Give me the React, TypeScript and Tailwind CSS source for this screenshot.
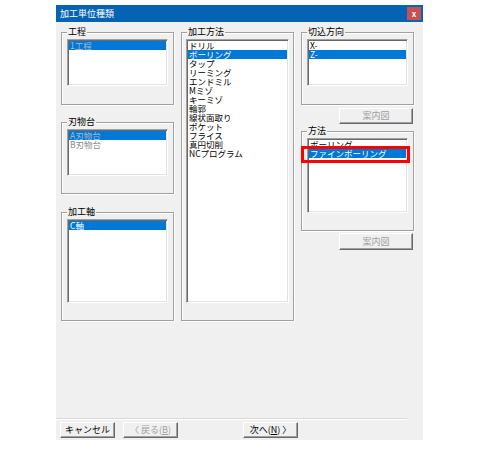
import type { ReactNode } from "react";

const FONT = { fontFamily: '"Noto Sans CJK JP", "Noto Sans", sans-serif' };

type Item = { label: string; selected?: boolean };

function Group({ label, className, children }: { label: string; className: string; children: ReactNode }) {
  return (
    <div
      className={`relative border border-[#a0a0a0] shadow-[inset_1px_1px_0_#fff,1px_1px_0_#fff] pt-[6px] px-[5px] ${className}`}
    >
      <span className="absolute left-[5px] -top-[7px] bg-[#f0f0f0] px-[1px] text-[9px] leading-[12px] text-black">
        {label}
      </span>
      {children}
    </div>
  );
}

function ListBox({
  items,
  className,
  disabled = false,
}: {
  items: Item[];
  className: string;
  disabled?: boolean;
}) {
  return (
    <div
      className={`bg-white border border-t-[#a0a0a0] border-l-[#a0a0a0] border-r-white border-b-white shadow-[inset_1px_1px_0_#696969,inset_-1px_-1px_0_#e3e3e3] p-[1px] overflow-hidden ${className}`}
    >
      {items.map((it) => (
        <div
          key={it.label}
          className={`h-[9px] leading-[9px] text-[8.5px] pl-px whitespace-nowrap ${
            it.selected ? "bg-[#0078d7]" : ""
          } ${
            disabled
              ? it.selected
                ? "text-[#a9b9cc]"
                : "text-[#8c8c8c]"
              : it.selected
              ? "text-white"
              : "text-black"
          }`}
        >
          {it.label}
        </div>
      ))}
    </div>
  );
}

function Button({ children, disabled = false, className = "" }: { children: ReactNode; disabled?: boolean; className?: string }) {
  return (
    <div
      className={`flex items-center justify-center bg-[#f0f0f0] border border-t-white border-l-white border-r-[#696969] border-b-[#696969] shadow-[inset_-1px_-1px_0_#a0a0a0] text-[9px] leading-[10px] ${
        disabled ? "text-[#a0a0a0]" : "text-black"
      } ${className}`}
    >
      {children}
    </div>
  );
}

export default function App() {
  const methods: Item[] = [
    { label: "ドリル" },
    { label: "ボーリング", selected: true },
    { label: "タップ" },
    { label: "リーミング" },
    { label: "エンドミル" },
    { label: "Mミゾ" },
    { label: "キーミゾ" },
    { label: "輪郭" },
    { label: "線状面取り" },
    { label: "ポケット" },
    { label: "フライス" },
    { label: "真円切削" },
    { label: "NCプログラム" },
  ];

  return (
    <div className="w-[480px] h-[459px] bg-white pt-[5px] pl-[56px]" style={FONT}>
      <div className="w-[367px] h-[435px] flex flex-col bg-[#f0f0f0]">
        {/* Title bar */}
        <div className="h-[17px] bg-[#0563b4] flex items-center justify-between pl-[4px] pr-[2px]">
          <span className="text-white text-[9px] leading-[10px]">加工単位種類</span>
          <div className="w-[14px] h-[13px] bg-[#c75050] flex items-center justify-center text-white text-[8px] leading-none font-bold">
            x
          </div>
        </div>

        {/* Body */}
        <div className="flex-1 flex flex-col pt-[10px]">
          <div className="flex gap-[7px] pl-[5px]">
            {/* Left column */}
            <div className="w-[113px] flex flex-col">
              <Group label="工程" className="h-[73px]">
                <ListBox disabled className="h-[47px]" items={[{ label: "1工程", selected: true }]} />
              </Group>
              <Group label="刃物台" className="h-[72px] mt-[17px]">
                <ListBox
                  disabled
                  className="h-[47px]"
                  items={[{ label: "A刃物台", selected: true }, { label: "B刃物台" }]}
                />
              </Group>
              <Group label="加工軸" className="h-[109px] mt-[18px]">
                <ListBox className="h-[84px]" items={[{ label: "C軸", selected: true }]} />
              </Group>
            </div>

            {/* Middle column */}
            <div className="w-[113px]">
              <Group label="加工方法" className="h-[289px] !px-[4px]">
                <ListBox className="h-[264px]" items={methods} />
              </Group>
            </div>

            {/* Right column */}
            <div className="w-[113px] flex flex-col">
              <Group label="切込方向" className="h-[73px]">
                <ListBox className="h-[47px]" items={[{ label: "X-" }, { label: "Z-", selected: true }]} />
              </Group>
              <div className="flex justify-end pr-[1px] mt-[3px]">
                <Button disabled className="w-[74px] h-[16px]">案内図</Button>
              </div>
              <Group label="方法" className="h-[100px] mt-[7px]">
                <ListBox
                  className="h-[75px]"
                  items={[{ label: "ボーリング" }, { label: "ファインボーリング", selected: true }]}
                />
                <div className="absolute -left-[1px] top-[14px] w-[109px] h-[17px] border-[3px] border-[#ff0000]" />
              </Group>
              <div className="flex justify-end pr-[1px] mt-[2px]">
                <Button disabled className="w-[74px] h-[17px]">案内図</Button>
              </div>
            </div>
          </div>

          <div className="flex-1" />

          {/* Footer */}
          <div className="w-[351px] h-px bg-[#d8d8d8] shadow-[0_1px_0_#fff]" />
          <div className="flex items-center pl-[4px] mt-[3px] mb-[2px]">
            <Button className="w-[55px] h-[16px]">キャンセル</Button>
            <Button disabled className="w-[55px] h-[16px] ml-[8px]">
              〈 戻る(<span className="underline">B</span>)
            </Button>
            <Button className="w-[55px] h-[16px] ml-[65px]">
              次へ(<span className="underline">N</span>) 〉
            </Button>
          </div>
        </div>
      </div>
    </div>
  );
}
